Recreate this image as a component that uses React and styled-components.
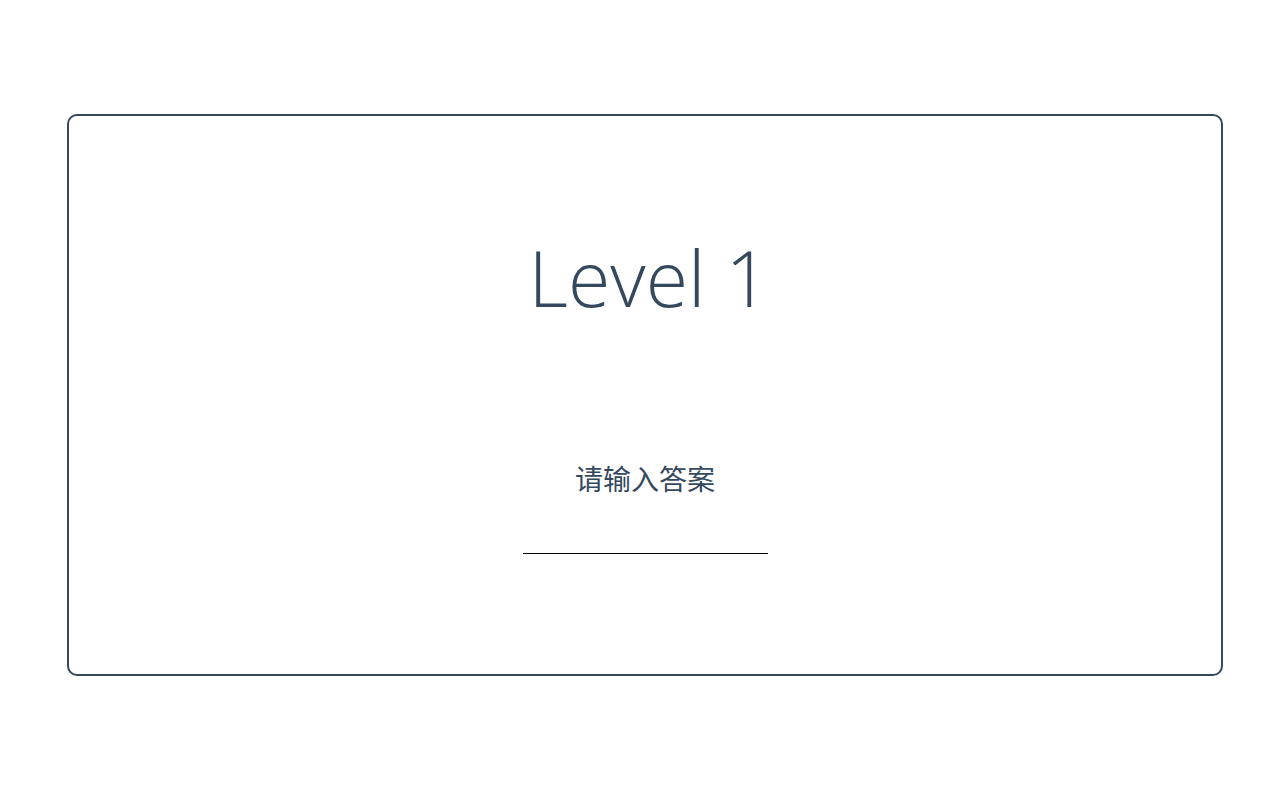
import React from 'react';
import styled, { createGlobalStyle } from 'styled-components';

const GlobalStyle = createGlobalStyle`
  html, body {
    margin: 0;
    padding: 0;
    background: #fff;
  }

  body {
    font-family: "Open Sans", "Noto Sans CJK SC", sans-serif;
    color: #34495e;
  }
`;

const Page = styled.div`
  padding: 114px 57px 0 67px;
`;

const Card = styled.div`
  box-sizing: border-box;
  width: 1156px;
  height: 562px;
  border: 2px solid #34495e;
  border-radius: 10px;

  display: flex;
  flex-direction: column;
  align-items: center;
`;

const Title = styled.h1`
  margin: 123px 0 0;
  padding-left: 8px;
  font-size: 77px;
  font-weight: 300;
  line-height: 1;
  color: #34495e;
`;

const Prompt = styled.p`
  margin: 148px 0 0;
  font-family: "Noto Sans CJK SC", sans-serif;
  font-size: 28px;
  line-height: 1;
  color: #34495e;
`;

const Answer = styled.input`
  box-sizing: border-box;
  width: 245px;
  height: 30px;
  margin-top: 32px;
  border: none;
  border-bottom: 1px solid #000;
  outline: none;
  background: transparent;
  text-align: center;
  font-size: 20px;
  color: #34495e;
`;

const App = () => (
  <Page>
    <GlobalStyle />
    <Card>
      <Title>Level 1</Title>
      <Prompt>请输入答案</Prompt>
      <Answer type="text" />
    </Card>
  </Page>
);

export default App;
